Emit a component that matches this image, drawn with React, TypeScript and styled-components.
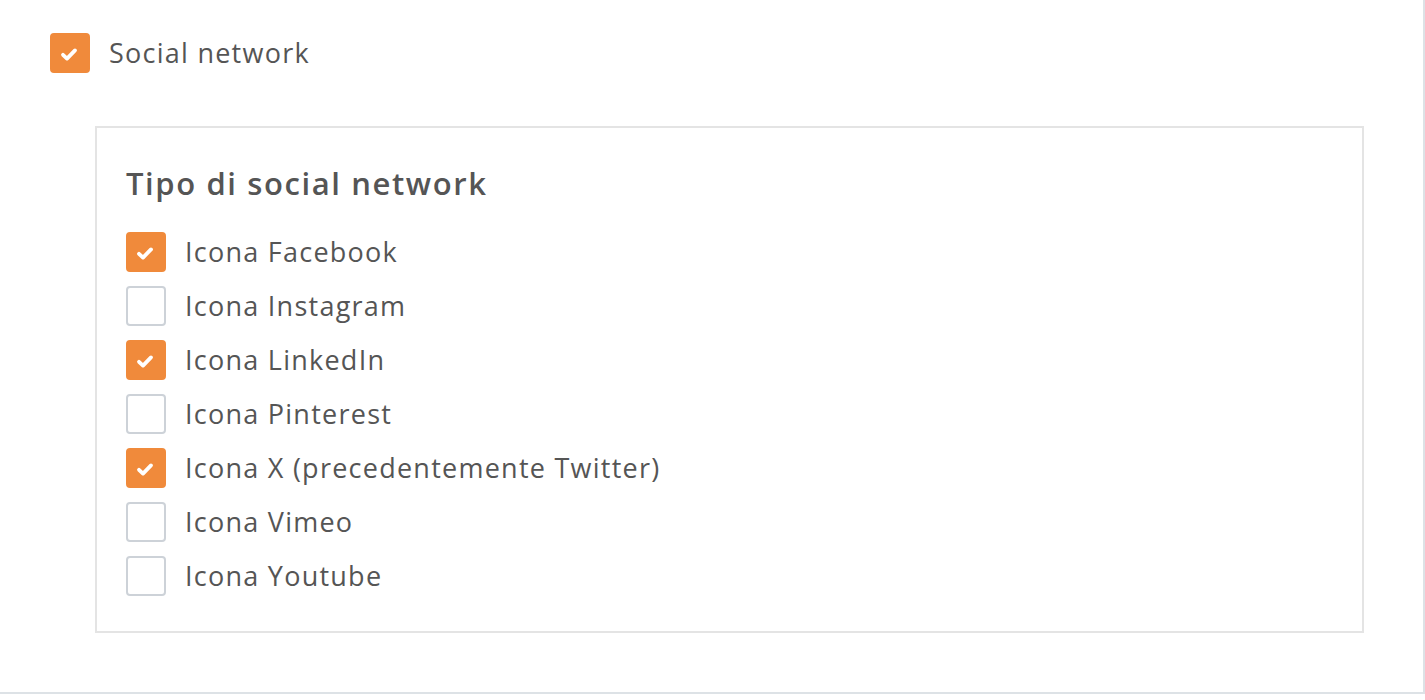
import React, { useState } from "react";
import styled, { createGlobalStyle } from "styled-components";

const GlobalStyle = createGlobalStyle`
  html, body {
    margin: 0;
    padding: 0;
    background: #ffffff;
  }
  body {
    font-family: "Open Sans", Lato, sans-serif;
    color: #555555;
  }
`;

const Panel = styled.div`
  box-sizing: border-box;
  width: 1425px;
  height: 694px;
  padding: 33px 59px 59px 50px;
  border-right: 2px solid #dde2e6;
  border-bottom: 2px solid #dde2e6;
  display: flex;
  flex-direction: column;
`;

const Row = styled.label`
  display: flex;
  align-items: center;
  gap: 19px;
  height: 40px;
  font-size: 27px;
  letter-spacing: 1.25px;
  line-height: 40px;
  color: #555555;
  cursor: pointer;
`;

const Box = styled.span<{ $checked: boolean }>`
  box-sizing: border-box;
  width: 40px;
  height: 40px;
  flex-shrink: 0;
  border-radius: 4px;
  display: flex;
  align-items: center;
  justify-content: center;
  padding: 3px 3px 0 0;
  background: ${({ $checked }) => ($checked ? "#f08a3b" : "#ffffff")};
  border: 2px solid ${({ $checked }) => ($checked ? "#f08a3b" : "#cdd2d8")};
`;

const Tick = styled.svg`
  width: 18px;
  height: 15px;
  flex-shrink: 0;
  display: block;
`;

const SubBox = styled.div`
  margin: 53px 0 0 45px;
  border: 2px solid #e4e4e4;
  padding: 37px 29px 35px;
  display: flex;
  flex-direction: column;
`;

const Heading = styled.h3`
  margin: 0 0 31px;
  font-size: 31px;
  font-weight: 600;
  letter-spacing: 1.6px;
  line-height: 36px;
  color: #555555;
`;

const List = styled.div`
  display: flex;
  flex-direction: column;
  gap: 14px;
`;

const Check: React.FC<{ checked: boolean; label: string; onToggle: () => void }> = ({
  checked,
  label,
  onToggle,
}) => (
  <Row onClick={onToggle}>
    <Box $checked={checked}>
      {checked && (
        <Tick viewBox="0 0 18 15">
          <path
            d="M3 7.8 L7 11.6 L15 3.4"
            fill="none"
            stroke="#ffffff"
            strokeWidth="3.8"
            strokeLinecap="round"
            strokeLinejoin="round"
          />
        </Tick>
      )}
    </Box>
    {label}
  </Row>
);

const initial = [
  { label: "Icona Facebook", checked: true },
  { label: "Icona Instagram", checked: false },
  { label: "Icona LinkedIn", checked: true },
  { label: "Icona Pinterest", checked: false },
  { label: "Icona X (precedentemente Twitter)", checked: true },
  { label: "Icona Vimeo", checked: false },
  { label: "Icona Youtube", checked: false },
];

export default function App() {
  const [social, setSocial] = useState(true);
  const [items, setItems] = useState(initial);

  const toggle = (i: number) =>
    setItems((prev) => prev.map((it, j) => (j === i ? { ...it, checked: !it.checked } : it)));

  return (
    <>
      <GlobalStyle />
      <Panel>
        <Check checked={social} label="Social network" onToggle={() => setSocial(!social)} />
        {social && (
          <SubBox>
            <Heading>Tipo di social network</Heading>
            <List>
              {items.map((it, i) => (
                <Check key={it.label} checked={it.checked} label={it.label} onToggle={() => toggle(i)} />
              ))}
            </List>
          </SubBox>
        )}
      </Panel>
    </>
  );
}
